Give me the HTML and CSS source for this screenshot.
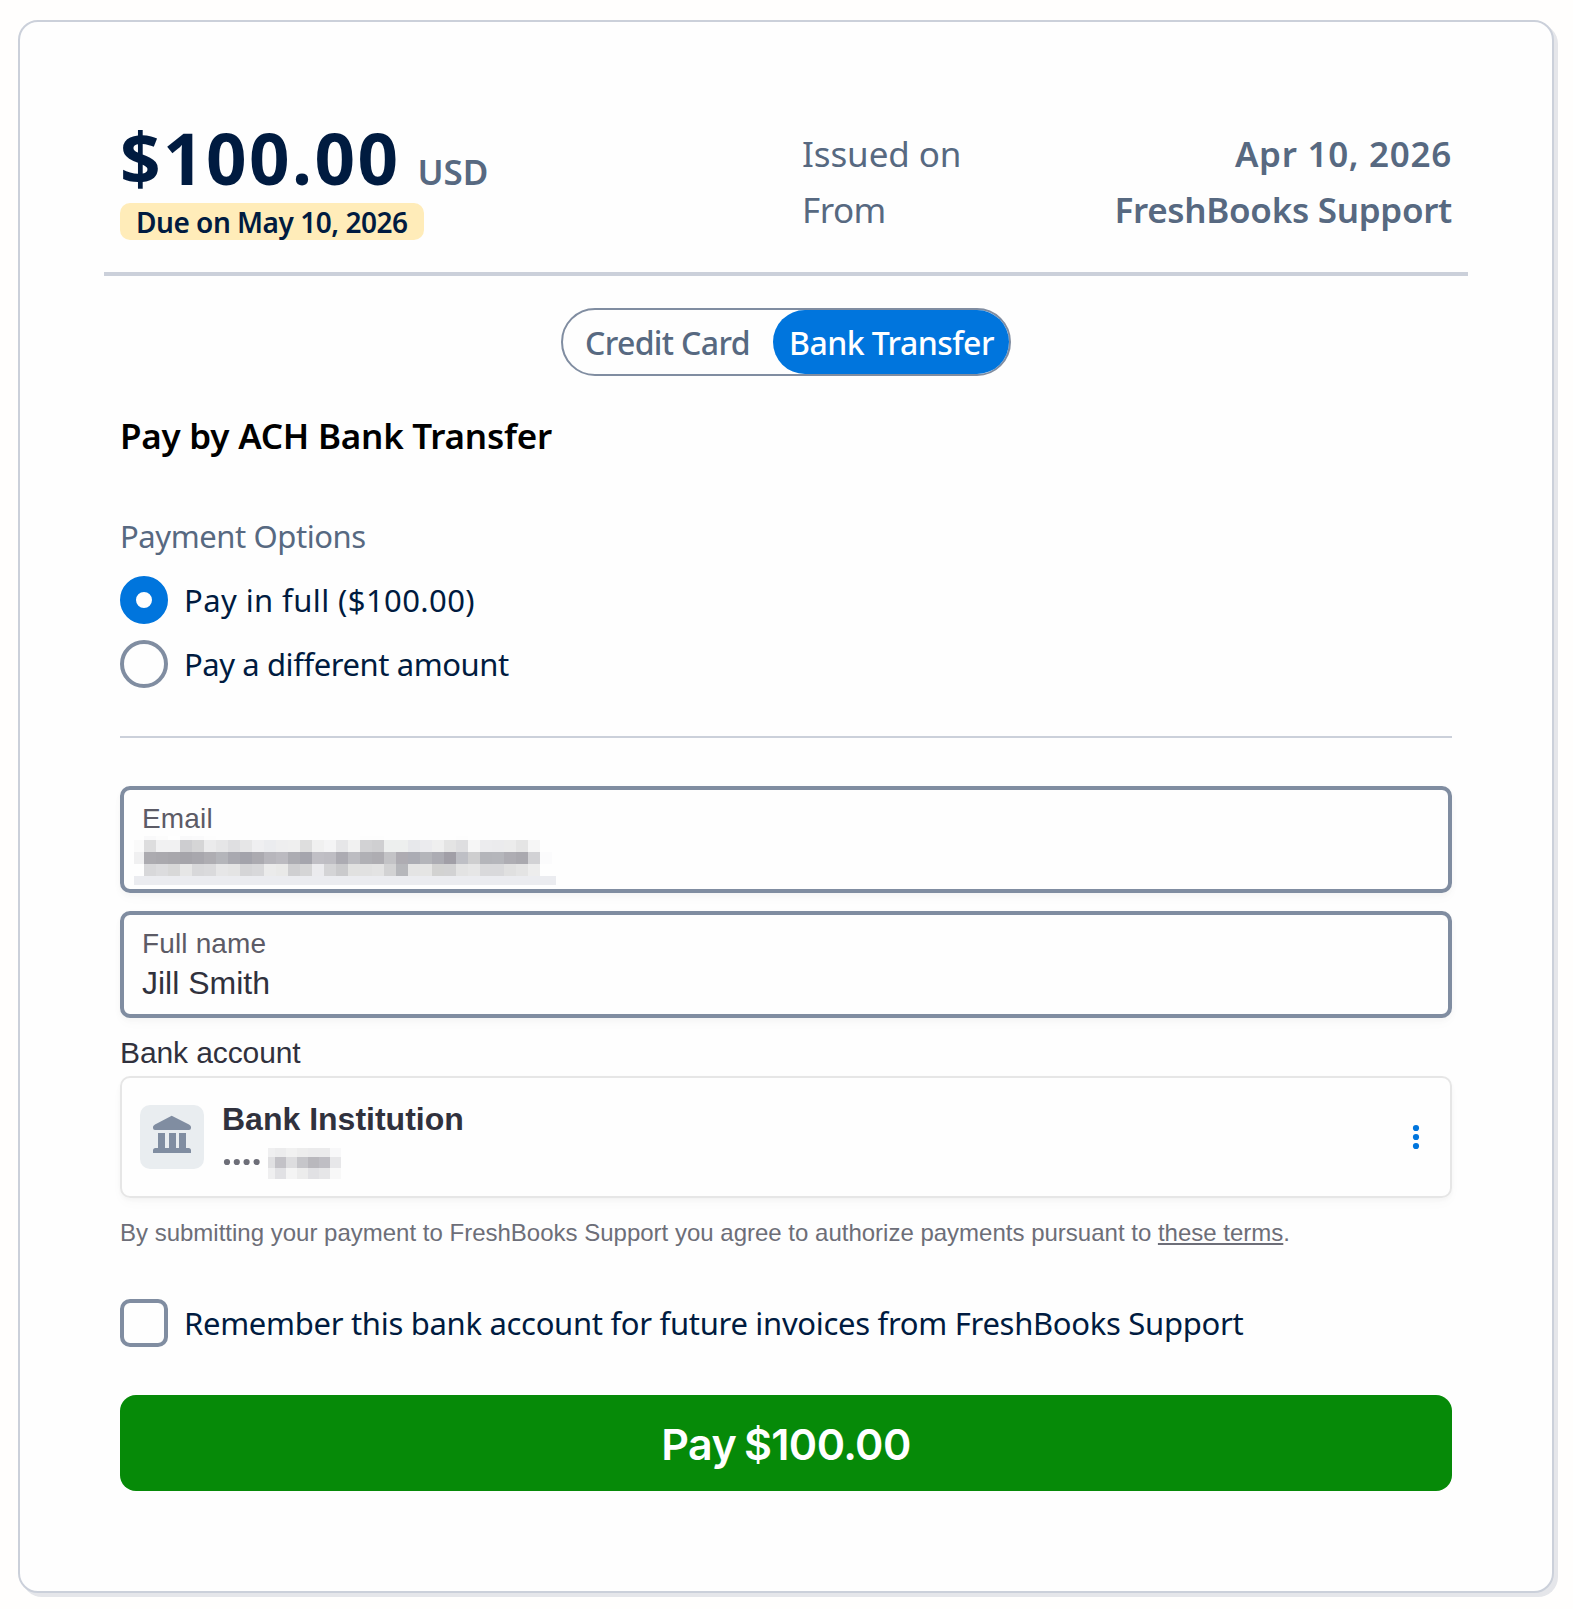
FILE: index.html
```html
<!DOCTYPE html>
<html lang="en">
<head>
    <meta charset="utf-8">
    <title>Pay Invoice</title>
    <link rel="stylesheet" href="styles.css">
</head>
<body>
    <div class="card">
        <div class="header">
            <div>
                <div class="amount-row">
                    <span class="amount">$100.00</span>
                    <span class="currency">USD</span>
                </div>
                <div class="badge">Due on May 10, 2026</div>
            </div>
            <div class="meta">
                <div class="meta-row"><span class="issued">Issued on</span><b class="date">Apr 10, 2026</b></div>
                <div class="meta-row"><span class="from">From</span><b class="company">FreshBooks Support</b></div>
            </div>
        </div>

        <div class="toggle">
            <div class="tab">Credit Card</div>
            <div class="tab active">Bank Transfer</div>
        </div>

        <h1>Pay by ACH Bank Transfer</h1>

        <div class="options-title">Payment Options</div>
        <div class="option"><i class="radio checked"></i><span class="opt-full">Pay in full ($100.00)</span></div>
        <div class="option"><i class="radio"></i><span class="opt-other">Pay a different amount</span></div>

        <div class="divider"></div>

        <div class="field">
            <label>Email</label>
            <svg class="redacted" id="email" width="424" height="50"></svg>
        </div>
        <div class="field">
            <label>Full name</label>
            <div class="value">Jill Smith</div>
        </div>

        <div class="bank-label">Bank account</div>
        <div class="bank">
            <div class="bank-icon">
                <svg width="64" height="64" viewBox="0 0 64 64" fill="#808da1">
                    <path d="M31.7 10.8L49 19.5Q51 20.5 51 22v1q0 2-2 2H15q-2 0-2-2v-1q0-1.500 2-2.500z"/>
                    <path d="M18 28h7v15h4V28h7v15h3V28h7v15h2.500q2.500 0 2.500 2.500V48H13v-2.500Q13 43 15.500 43H18z"/>
                </svg>
            </div>
            <div class="bank-info">
                <div class="bank-name">Bank Institution</div>
                <div class="bank-number">
                    <svg width="38" height="8" fill="#6d6e78">
                        <circle cx="4" cy="4" r="3.100"/>
                        <circle cx="13.800" cy="4" r="3.100"/>
                        <circle cx="23.600" cy="4" r="3.100"/>
                        <circle cx="33.600" cy="4" r="3.100"/>
                    </svg>
                    <svg id="digits" width="78" height="32"></svg>
                </div>
            </div>
            <svg class="menu" width="8" height="26" fill="#0075dd">
                <circle cx="4" cy="4" r="3.100"/>
                <circle cx="4" cy="13" r="3.100"/>
                <circle cx="4" cy="22" r="3.100"/>
            </svg>
        </div>

        <div class="terms">By submitting your payment to FreshBooks Support you agree to authorize payments pursuant to <a>these terms</a>.</div>

        <div class="option remember"><i class="checkbox"></i><span>Remember this bank account for future invoices from FreshBooks Support</span></div>

        <div class="pay">Pay $100.00</div>
    </div>

    <script>
        // draws one row of the pixelated masks: x, y, cell width, height, colors
        function drawRow(id, x, y, w, h, colors) {
            var svg = document.getElementById(id);
            var list = colors.split(" ");
            for (var i = 0; i < list.length; i++) {
                var r = document.createElementNS("http://www.w3.org/2000/svg", "rect");
                r.setAttribute("x", x + i * w);
                r.setAttribute("y", y);
                r.setAttribute("width", w);
                r.setAttribute("height", h);
                r.setAttribute("fill", "#" + list[i]);
                svg.appendChild(r);
            }
        }

        drawRow("email", 10, 0, 12, 4, "f9f9fa fcfcfc fff f9f9fa fafafb fdfdfd");
        drawRow("email", 226, 0, 12, 4, "fdfdfd fdfdfd");
        drawRow("email", 322, 0, 12, 4, "fdfdfd");
        drawRow("email", 0, 4, 10, 12, "fafafa");
        drawRow("email", 10, 4, 12, 12, "ddddde f1f1f2 f1f1f2 cdcdd0 d5d5d6 ebebec e6e6e7 dfdfe1 e6e6e7 efeff1 ebecef eeeeef efefef dedede f0f0f0 f4f4f5 e6e6e8 f1f1f1 d2d2d4 cfcfd1 edefee edefee e7e8eb ebebee efefef e4e4e4 dedee0 f6f6f6 ececee ebebed ececec e5e5e5 f6f6f6");
        drawRow("email", 0, 16, 10, 12, "f0f0f1");
        drawRow("email", 10, 16, 12, 12, "acabb0 aaa9ae a8a7ac a5a4aa a8a7ad aeadb2 b4b5ba a9a9b0 a3a3ab abaab0 b7b6bc bbbac0 acacb2 a5a5ad c0bfc5 bebdc3 acabb2 bcbcc1 b0b0b5 aeadb2 c3c3c6 aeacb2 abacb4 b4b5ba acacb3 a19fa7 bebfc5 cececf b4b5ba b5b6bb aeadb3 aaa9af d2d2d5 fbfbfc");
        drawRow("email", 10, 28, 12, 12, "d8d8da dcdcde d8d8d8 e6e6e6 d8d8da dadadc e6e6e7 e4e4e4 d5d5d7 d8d8da ebebeb e9e9e8 cfcfd1 d5d5d6 ebebee d4d4d6 cacacc e1e1e0 e1e1e1 e3e3e3 d2d2d3 b6b7bb e4e4e4 e5e5e4 d2d2d1 d2d2d3 e3e3e3 e6e6e6 d9d9db d9d9db e0e0e0 e4e4e4 ededed");
        drawRow("email", 0, 40, 422, 9, "ebecf0");

        drawRow("digits", 0, 0, 7, 9, "efeff0");
        drawRow("digits", 7, 0, 11, 9, "ececed f1f1f1 ededed ebebec ebebec f8f8f9");
        drawRow("digits", 0, 9, 7, 11, "e0e0e2");
        drawRow("digits", 7, 9, 11, 11, "c3c2c7 dddddf c6c6ca b9b8bd bfbec4 e7e7e9");
        drawRow("digits", 0, 20, 7, 11, "efeff0");
        drawRow("digits", 7, 20, 11, 11, "e1e1e4 f4f4f4 ececec e1e1e4 e6e6e8 f8f8f8");
    </script>
</body>
</html>
```
FILE: styles.css
```css
* {
    box-sizing: border-box;
}

body {
    font-family: "Noto Sans", sans-serif;
    background: #fffefd;
    margin: 0;
    padding: 20px 19px 16px 18px;
}

.card {
    width: 1536px;
    height: 1573px;
    padding: 96px 100px 0;
    background: #fefefe;
    border: 2px solid #cbd0da;
    border-radius: 20px;
    box-shadow: 4px 4px 0 #e5e6ea;
    white-space: nowrap;
}

.header {
    display: flex;
    justify-content: space-between;
    margin: 0 -16px;
    padding: 0 16px 32px;
    border-bottom: 4px solid #cbd0da;
}

.amount-row {
    display: flex;
    align-items: baseline;
    gap: 17px;
    height: 80px;
    line-height: 80px;
    font-weight: 600;
}

.amount {
    font-size: 71px;
    font-weight: 700;
    letter-spacing: 2.4px;
    color: #001b40;
}

.currency {
    font-size: 35px;
    color: #576981;
}

.badge {
    width: 304px;
    height: 37px;
    margin-top: 5px;
    padding-left: 16px;
    line-height: 38px;
    background: #ffecb9;
    border-radius: 10px;
    font-size: 28px;
    font-weight: 600;
    letter-spacing: -0.48px;
    color: #001b40;
}

.meta {
    width: 650px;
    margin-top: 8px;
    font-size: 35px;
    line-height: 56px;
    color: #576981;
}

.meta-row {
    display: flex;
    justify-content: space-between;
}

.meta b {
    font-weight: 600;
}

.issued {
    letter-spacing: -0.1px;
}

.from {
    letter-spacing: -0.5px;
}

.date {
    letter-spacing: 0.7px;
}

.company {
    letter-spacing: -0.3px;
}

.toggle {
    display: flex;
    width: 450px;
    height: 68px;
    margin: 32px auto 0;
    border: 2px solid #808da1;
    border-radius: 34px;
    font-size: 32px;
    font-weight: 500;
    line-height: 65px;
    letter-spacing: -0.65px;
    color: #576981;
}

.tab {
    width: 210px;
    padding-left: 22px;
}

.tab.active {
    width: 236px;
    padding-left: 16px;
    background: #0075dd;
    border-radius: 32px;
    letter-spacing: -0.55px;
    color: #fff;
}

h1 {
    margin: 36px 0 0;
    font-size: 35px;
    font-weight: 600;
    line-height: 48px;
    letter-spacing: -0.23px;
    color: #000;
}

.options-title {
    margin: 56px 0 20px;
    font-size: 31px;
    line-height: 40px;
    letter-spacing: -0.42px;
    color: #576981;
}

.option {
    display: flex;
    align-items: center;
    gap: 16px;
    height: 48px;
    margin-bottom: 16px;
    font-size: 31px;
    color: #001b40;
}

.opt-full {
    letter-spacing: 0.41px;
}

.opt-other {
    letter-spacing: -0.42px;
}

.radio,
.checkbox {
    width: 48px;
    height: 48px;
    border: 4px solid #808da1;
    border-radius: 50%;
}

.radio.checked {
    border: 16px solid #0075dd;
}

.checkbox {
    border-radius: 10px;
}

.divider {
    height: 2px;
    margin: 48px 0;
    background: #cbd0da;
}

.field {
    height: 107px;
    margin-bottom: 18px;
    padding: 13px 18px 0;
    border: 4px solid #808da1;
    border-radius: 10px;
    box-shadow: 0 2px 6px rgba(0, 0, 0, 0.03), 0 6px 12px rgba(0, 0, 0, 0.02);
    font-family: "Liberation Sans", Arial, sans-serif;
}

.field label {
    display: block;
    font-size: 28px;
    line-height: 32px;
    letter-spacing: 0.15px;
    color: #5c5b66;
}

.redacted {
    display: block;
    margin: 1px 0 0 -8px;
}

.value {
    margin-top: 3px;
    font-size: 32px;
    line-height: 40px;
    color: #30313d;
}

.bank-label {
    margin: -1px 0 5px;
    font-family: "Liberation Sans", Arial, sans-serif;
    font-size: 30px;
    line-height: 36px;
    letter-spacing: -0.1px;
    color: #30313d;
}

.bank {
    display: flex;
    height: 122px;
    padding: 0 30px 0 18px;
    align-items: center;
    border: 2px solid #e6e6e6;
    border-radius: 10px;
    box-shadow: 0 2px 4px rgba(0, 0, 0, 0.03), 0 6px 12px rgba(0, 0, 0, 0.02);
    font-family: "Liberation Sans", Arial, sans-serif;
}

.bank-icon {
    width: 64px;
    height: 64px;
    background: #e9edf0;
    border-radius: 10px;
}

.bank-info {
    height: 118px;
    margin-left: 18px;
    padding-top: 21px;
}

.bank-name {
    font-size: 32px;
    font-weight: bold;
    line-height: 40px;
    color: #30313d;
}

.bank-number {
    display: flex;
    align-items: center;
    gap: 7px;
    height: 32px;
    margin: 9px 0 0 1px;
}

.bank-number svg:first-child {
    margin-top: -4px;
}

.menu {
    margin-left: auto;
}

.terms {
    margin-top: 19px;
    font-family: "Liberation Sans", Arial, sans-serif;
    font-size: 24px;
    line-height: 32px;
    color: #6d6e78;
}

.terms a {
    text-decoration: underline;
}

.remember {
    margin: 50px 0 48px;
    letter-spacing: -0.3px;
}

.pay {
    height: 96px;
    line-height: 99px;
    background: #068a08;
    border-radius: 16px;
    text-align: center;
    font-family: Inter, sans-serif;
    font-size: 43px;
    font-weight: 600;
    letter-spacing: -0.6px;
    word-spacing: -2.5px;
    color: #fff;
}
```
